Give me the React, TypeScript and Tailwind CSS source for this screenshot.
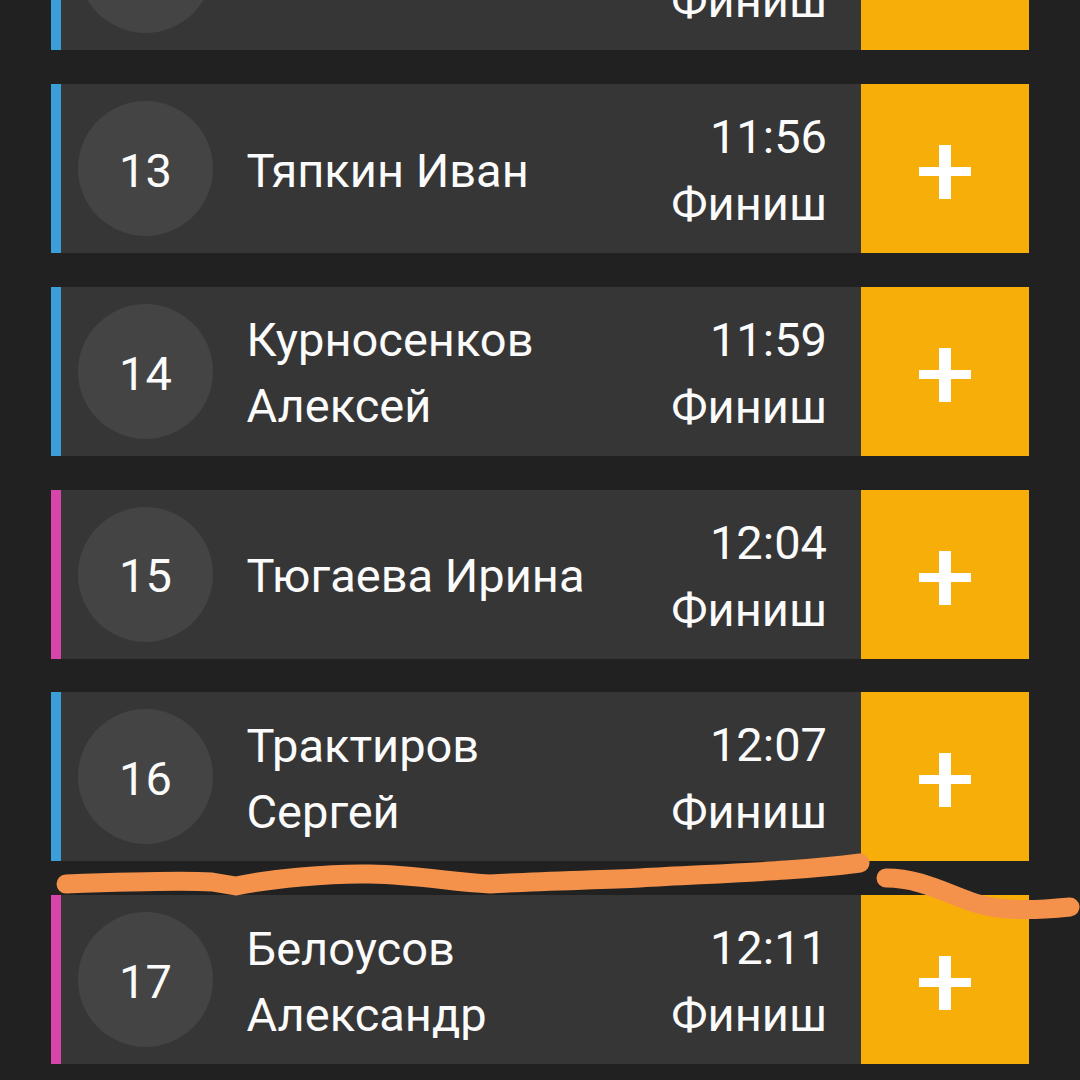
const rows = [
  { n: "12", lines: [""], time: "11:53", stripe: "bg-[#3a9fd8]" },
  { n: "13", lines: ["Тяпкин Иван"], time: "11:56", stripe: "bg-[#3a9fd8]" },
  { n: "14", lines: ["Курносенков", "Алексей"], time: "11:59", stripe: "bg-[#3a9fd8]" },
  { n: "15", lines: ["Тюгаева Ирина"], time: "12:04", stripe: "bg-[#d845aa]" },
  { n: "16", lines: ["Трактиров", "Сергей"], time: "12:07", stripe: "bg-[#3a9fd8]" },
  { n: "17", lines: ["Белоусов", "Александр"], time: "12:11", stripe: "bg-[#d845aa]" },
];

function Row({ r }: { r: (typeof rows)[number] }) {
  return (
    <div className="flex h-[169px] w-[978px] shrink-0 bg-[#363636]">
      <div className={`w-[10px] shrink-0 ${r.stripe}`} />
      <div className="ml-[17px] mt-[17px] flex h-[135px] w-[135px] shrink-0 items-center justify-center rounded-full bg-[#454444] pt-[5px] text-[47px]">
        {r.n === "12" ? "" : r.n}
      </div>
      <div className="ml-[33.5px] flex w-[395px] shrink-0 flex-col justify-center pt-[4px] text-[47px] leading-[66px]">
        {r.lines.map((l) => (
          <div key={l}>{l}</div>
        ))}
      </div>
      <div className="ml-auto mr-[34px] flex flex-col items-end justify-center pt-[3px] text-[47px] leading-[67px]">
        <div>{r.time}</div>
        <div>Финиш</div>
      </div>
      <div className="flex w-[168px] shrink-0 items-center justify-center bg-[#f8ae09] pt-[7px]">
        <svg width="52" height="54" viewBox="0 0 52 54" fill="#fff">
          <rect x="20" y="0" width="12" height="54" />
          <rect x="0" y="22" width="52" height="9" />
        </svg>
      </div>
    </div>
  );
}

export default function App() {
  return (
    <div className="relative h-[1080px] w-[1080px] overflow-hidden bg-[#212121] font-['Roboto',sans-serif] text-[#fbfbfb]">
      <div className="ml-[51px] mt-[-118.7px] flex flex-col gap-[33.75px]">
        {rows.map((r) => (
          <Row key={r.n} r={r} />
        ))}
      </div>
      <svg className="absolute left-0 top-0" width="1080" height="1080" viewBox="0 0 1080 1080" fill="none" stroke="#f4914a" strokeWidth="19" strokeLinecap="round" strokeLinejoin="round">
        <path d="M66 884 C120 882 180 880 212 882 L236 886 C270 879 330 873 370 874 C420 875 450 882 490 884 C540 881 600 880 640 878 C730 873 800 871 860 863" />
        <path d="M886 878 C920 878 945 893 975 903 C1000 911 1030 911 1070 907" strokeWidth="19" />
      </svg>
    </div>
  );
}
